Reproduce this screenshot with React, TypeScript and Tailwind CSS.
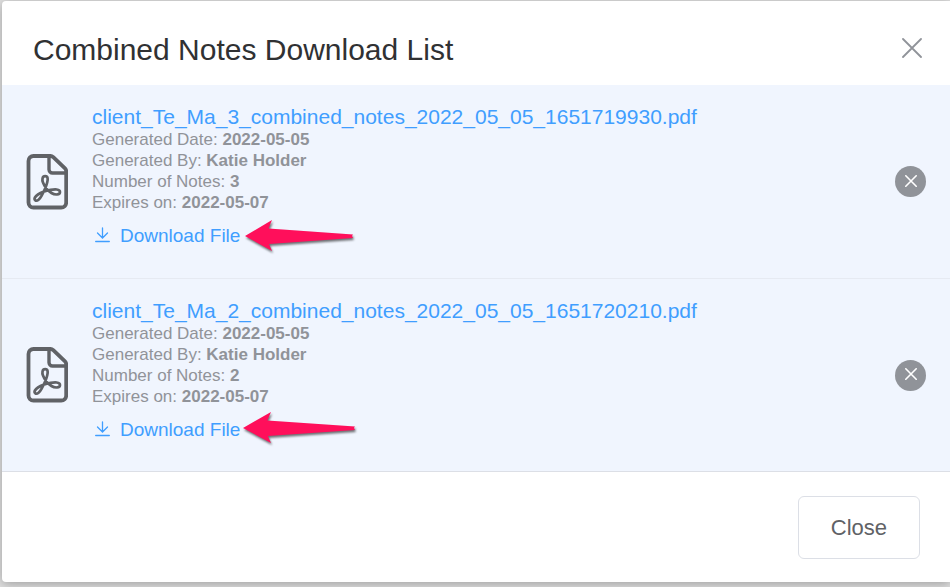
type Note = {
  file: string;
  date: string;
  author: string;
  count: number;
  expires: string;
};

const notes: Note[] = [
  {
    file: "client_Te_Ma_3_combined_notes_2022_05_05_1651719930.pdf",
    date: "2022-05-05",
    author: "Katie Holder",
    count: 3,
    expires: "2022-05-07",
  },
  {
    file: "client_Te_Ma_2_combined_notes_2022_05_05_1651720210.pdf",
    date: "2022-05-05",
    author: "Katie Holder",
    count: 2,
    expires: "2022-05-07",
  },
];

function PdfIcon() {
  return (
    <svg
      className="w-[42px] h-14 shrink-0 text-[#606266]"
      viewBox="0 0 42 56"
      fill="none"
      stroke="currentColor"
      strokeLinecap="round"
      strokeLinejoin="round"
      aria-hidden="true"
    >
      <path
        strokeWidth="3.8"
        d="M7.500 2h17c1.200 0 2 .4 2.800 1.100L39 14.400c.8.8 1.200 1.700 1.200 2.800V48.500a5 5 0 0 1-5 5H7.500a5 5 0 0 1-5-5V7a5 5 0 0 1 5-5z"
      />
      <path strokeWidth="3.4" d="M23 3v12.500a3.500 3.500 0 0 0 3.500 3.500h12.500" />
      <path
        strokeWidth="2.700"
        d="M19.200 22.200C16 22.200 16 26 17 28.500C18.500 32.500 21.500 36.500 25.500 39C29 41.200 34 41 34 38C34 34.800 28.500 35.200 24.500 35.900C20 36.800 15.500 38.200 12 40.500C9.200 42.300 7.600 44.800 9.200 46.200C11.200 47.900 14 44.600 15.500 41.800C17.800 37.700 20.200 32.500 21.200 28.500C22 25.300 22.200 22.200 19.200 22.200z"
      />
    </svg>
  );
}

function DownloadIcon() {
  return (
    <svg
      className="w-[15px] h-4 shrink-0"
      viewBox="0 0 15 16"
      fill="none"
      stroke="currentColor"
      strokeWidth="1.3"
      strokeLinecap="round"
      aria-hidden="true"
    >
      <path d="M7.500 1v10M2.500 6l5 5 5-5M.700 14.500h13.600" />
    </svg>
  );
}

function Arrow({ wide }: { wide: boolean }) {
  return (
    <svg
      className={`h-8 shrink-0 overflow-visible drop-shadow-[1px_2px_1px_rgba(0,0,0,0.55)] ${
        wide ? "w-[113px] ml-[3px] -mt-0.5" : "w-[109px] ml-[5px] mt-0.5"
      }`}
      viewBox="0 0 109 32"
      preserveAspectRatio="none"
      fill="#ff0f5b"
      aria-hidden="true"
    >
      <path d="M0 16 27 0l-3.500 8.500L108 14.500l-1 1.500 1 2L24 24l3 7z" />
    </svg>
  );
}

function NoteRow({ note, wide }: { note: Note; wide: boolean }) {
  return (
    <li className="group flex items-center px-6 border-b border-[#e6eaf2] last:border-[#dcdfe6]">
      <PdfIcon />
      <div className="flex-1 min-w-0 ml-6 pt-5 pb-[29px] group-last:pb-7 text-[17px] leading-[21px] text-[#909399]">
        <a href="#" className="block text-[21px] leading-6 text-[#409eff]">
          {note.file}
        </a>
        <p>
          Generated Date: <b>{note.date}</b>
        </p>
        <p>
          Generated By: <b>{note.author}</b>
        </p>
        <p>
          Number of Notes: <b>{note.count}</b>
        </p>
        <p>
          Expires on: <b>{note.expires}</b>
        </p>
        <div className="flex items-center h-7 mt-2">
          <a href="#" className="flex items-center gap-2.5 ml-[3px] text-[19px] text-[#409eff]">
            <DownloadIcon />
            Download File
          </a>
          <Arrow wide={wide} />
        </div>
      </div>
      <button
        type="button"
        aria-label={`Remove ${note.file}`}
        className="flex items-center justify-center w-[31px] h-[31px] shrink-0 rounded-full bg-[#909399] text-white"
      >
        <svg
          className="w-3 h-3 mb-0.5"
          viewBox="0 0 12 12"
          fill="none"
          stroke="currentColor"
          strokeWidth="1.6"
          strokeLinecap="round"
        >
          <path d="m.800.800 10.400 10.400M11.200.800.800 11.200" />
        </svg>
      </button>
    </li>
  );
}

export default function App() {
  return (
    <div className="min-h-screen pl-0.5 pt-px bg-[#e0e0e0] overflow-hidden font-['Liberation_Sans',Arial,sans-serif]">
      <section
        role="dialog"
        aria-labelledby="dialog-title"
        className="bg-white rounded-l shadow-[0_2px_12px_rgba(0,0,0,0.3)]"
      >
        <header className="flex items-center justify-between h-[84px] pl-[31px] pr-7 pt-[14px]">
          <h1 id="dialog-title" className="text-[30px] leading-9 text-[#303133]">
            Combined Notes Download List
          </h1>
          <button type="button" aria-label="Close dialog" className="mb-1 text-[#909399]">
            <svg
              className="w-5 h-5"
              viewBox="0 0 20 20"
              fill="none"
              stroke="currentColor"
              strokeWidth="1.800"
              strokeLinecap="round"
            >
              <path d="m1 1 18 18M19 1 1 19" />
            </svg>
          </button>
        </header>

        <ul className="bg-[#f0f5fe]">
          {notes.map((note, i) => (
            <NoteRow key={note.file} note={note} wide={i === 1} />
          ))}
        </ul>

        <footer className="flex justify-end px-[30px] pt-6 pb-[23px]">
          <button
            type="button"
            className="px-8 py-4 rounded-md border border-[#dcdfe6] bg-white text-[22px] leading-[29px] text-[#606266]"
          >
            Close
          </button>
        </footer>
      </section>
    </div>
  );
}
